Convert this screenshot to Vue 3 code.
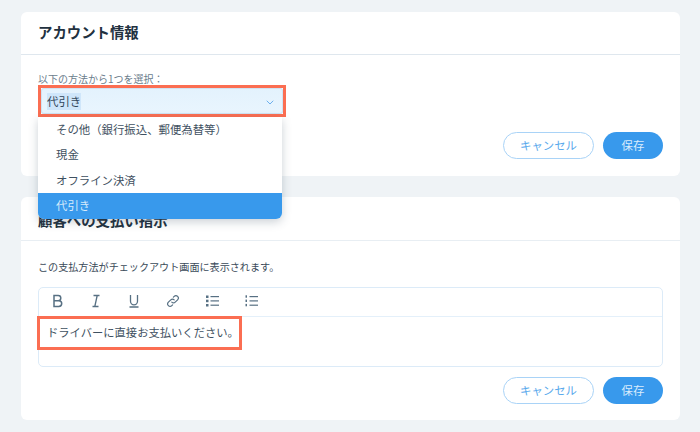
<template>
  <div class="page">
    <section class="card first">
      <h2 class="card-title">アカウント情報</h2>
      <div class="card-body">
        <div class="label">以下の方法から1つを選択：</div>
        <div class="select-wrap">
          <div class="select-mark">
            <div class="select">
              <span class="sel-text">{{ selected }}</span>
              <svg class="chev" width="8" height="5" viewBox="0 0 8 5" fill="none" stroke="#6db0ee" stroke-width="1" stroke-linecap="round" stroke-linejoin="round"><polyline points="1 1 4 4 7 1"/></svg>
            </div>
          </div>
          <ul class="menu">
            <li v-for="o in options" :key="o" class="opt" :class="{ active: o === selected }">{{ o }}</li>
          </ul>
        </div>
        <div class="actions one">
          <button class="btn ghost">キャンセル</button>
          <button class="btn solid">保存</button>
        </div>
      </div>
    </section>

    <section class="card second">
      <h2 class="card-title">顧客への支払い指示</h2>
      <div class="card-body two">
        <div class="note">この支払方法がチェックアウト画面に表示されます。</div>
        <div class="editor">
          <div class="toolbar">
            <svg width="12" height="14" viewBox="0 0 12 14" fill="none" stroke="#577083" stroke-width="1.5"><path d="M2 1.5h4.2a2.6 2.6 0 0 1 0 5.2H2zM2 6.7h4.8a2.9 2.9 0 0 1 0 5.8H2z"/></svg>
            <svg width="12" height="14" viewBox="0 0 12 14" fill="none" stroke="#577083" stroke-width="1.3"><path d="M3.5 1.5h6M2.5 12.5h6M7.2 1.5 4.8 12.5"/></svg>
            <svg width="12" height="14" viewBox="0 0 12 14" fill="none" stroke="#577083" stroke-width="1.3"><path d="M2.5 1v6.3a3.5 3.5 0 0 0 7 0V1M1.5 13h9"/></svg>
            <svg width="14" height="14" viewBox="0 0 14 14" fill="none" stroke="#577083" stroke-width="1.2" stroke-linecap="round"><path d="M5.8 8.2a2.4 2.4 0 0 0 3.4 0l2.4-2.4a2.4 2.4 0 0 0-3.4-3.4L7.4 3.2"/><path d="M8.2 5.8a2.4 2.4 0 0 0-3.4 0L2.4 8.2a2.4 2.4 0 0 0 3.4 3.4l.8-.8"/></svg>
            <svg width="13" height="12" viewBox="0 0 13 12" fill="#577083"><rect x="0" y="0.5" width="2.5" height="2.5"/><rect x="0" y="4.7" width="2.5" height="2.5"/><rect x="0" y="9" width="2.5" height="2.5"/><rect x="4.5" y="1" width="8.5" height="1.2"/><rect x="4.5" y="5.3" width="8.5" height="1.2"/><rect x="4.5" y="9.6" width="8.5" height="1.2"/></svg>
            <svg width="13" height="12" viewBox="0 0 13 12" fill="#577083"><rect x="0.5" y="0.3" width="1.5" height="2.4"/><rect x="0.5" y="4.6" width="1.5" height="2.4"/><rect x="0.5" y="8.9" width="1.5" height="2.4"/><rect x="4.5" y="1" width="8.5" height="1.2"/><rect x="4.5" y="5.3" width="8.5" height="1.2"/><rect x="4.5" y="9.6" width="8.5" height="1.2"/></svg>
          </div>
          <div class="editor-body">
            <span class="msg">ドライバーに直接お支払いください。</span>
          </div>
        </div>
        <div class="actions">
          <button class="btn ghost">キャンセル</button>
          <button class="btn solid">保存</button>
        </div>
      </div>
    </section>
  </div>
</template>

<script setup>
const options = ['その他（銀行振込、郵便為替等）', '現金', 'オフライン決済', '代引き']
const selected = '代引き'
</script>

<style>
html, body { background: #eff3f6; }
</style>

<style scoped>
.page { width: 700px; height: 432px; box-sizing: border-box; padding: 12px 20px 0 21px; overflow: hidden; background: #eff3f6; font-family: "Noto Sans CJK JP", "Noto Sans", sans-serif; }
.card { background: #fff; border-radius: 6px; }
.first { height: 164px; margin-bottom: 21px; }
.second { height: 223px; }
.card-title { margin: 0; height: 42px; padding-left: 17px; font-size: 14.4px; font-weight: 700; line-height: 40px; color: #22313f; border-bottom: 1px solid #dfe7ee; }
.second .card-title { height: 43px; line-height: 46px; border-bottom-color: #e8eef3; }
.card-body { padding: 0 17px; }
.label { padding-top: 15px; height: 15px; font-size: 10px; line-height: 17px; color: #6b7d8c; }
.select-wrap { position: relative; width: 248px; }
.select-mark { border: 3px solid #fb6e52; height: 32px; box-sizing: border-box; }
.select { height: 26px; display: flex; align-items: center; justify-content: space-between; padding: 0 9px 0 6px; background: linear-gradient(#e3f2fd, #e9f5fe); box-shadow: inset 0 0 0 1px #cfe3f3; border-radius: 3px; }
.sel-text { margin-top: 1px; font-size: 11.4px; line-height: 17px; color: #33485a; background: #cfe6fa; }
.chev { margin-top: 2px; }
.menu { position: absolute; top: 32px; left: 0; width: 244px; margin: 0; padding: 0; list-style: none; background: #fff; border-radius: 0 0 6px 6px; box-shadow: 0 3px 10px rgba(50, 70, 90, 0.25); overflow: hidden; z-index: 2; }
.opt { height: 25.4px; padding-left: 18px; font-size: 11.4px; line-height: 24.5px; color: #3f5161; }
.opt.active { background: #3899ec; color: #d6eafb; }
.actions { display: flex; justify-content: flex-end; gap: 9px; }
.actions.one { padding-top: 15px; }
.btn { height: 27px; border-radius: 14px; font-family: inherit; font-size: 11.4px; line-height: 1; padding: 0; box-sizing: border-box; }
.ghost { width: 91px; background: #fff; border: 1px solid #a9d3f7; color: #5aa9ec; }
.solid { width: 60px; background: #3899ec; border: 0; color: #d9ecfc; }
.note { padding-top: 17px; height: 17px; font-size: 10.1px; line-height: 17px; color: #3a4a58; }
.editor { margin-top: 12px; height: 80px; border: 1px solid #dcebf8; border-radius: 5px; box-sizing: border-box; }
.toolbar { height: 28px; display: flex; align-items: center; gap: 26px; padding-left: 13px; border-bottom: 1px solid #e4f0fa; }
.toolbar svg { margin-top: -3px; }
.editor-body { position: relative; height: 50px; }
.msg { position: absolute; top: -1px; left: -2px; padding: 0 0 0 7px; width: 205px; height: 34px; line-height: 26px; box-sizing: border-box; border: 3px solid #fb6e52; font-size: 11.3px; color: #3f5161; white-space: nowrap; background: #fff; }
.two .actions { padding-top: 10px; }
</style>
